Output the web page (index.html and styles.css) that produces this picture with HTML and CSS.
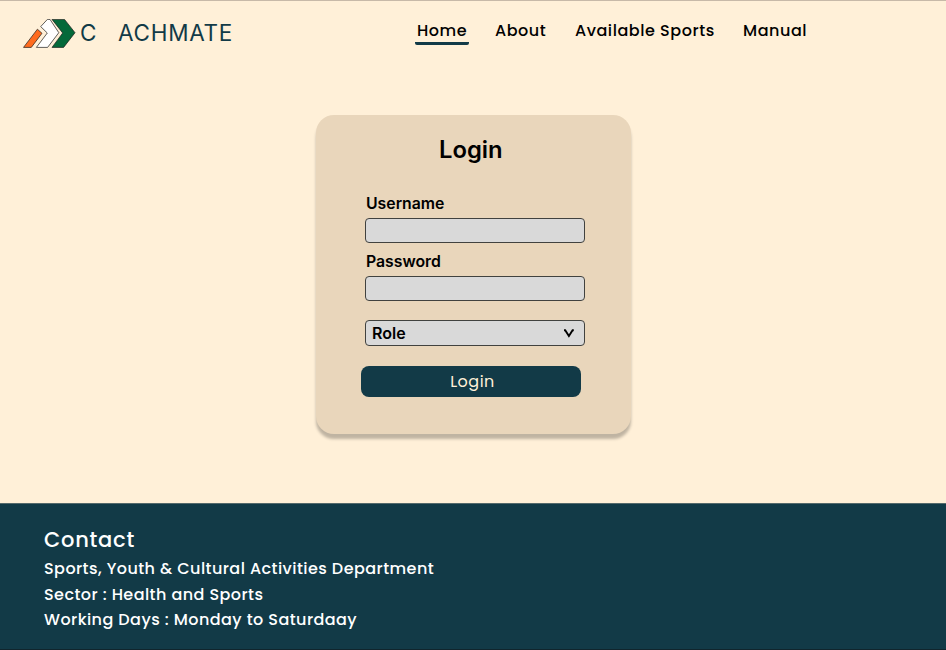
FILE: index.html
```html
<!DOCTYPE html>
<html lang="en">
<head>
<meta charset="utf-8">
<title>Coachmate</title>
<link rel="stylesheet" href="styles.css">
</head>
<body>
<header class="header">
  <a class="brand">
    <svg class="logo" viewBox="23 19 53 29" width="53" height="29" stroke="#1d1d1b" stroke-width=".7">
      <path fill="#ff6b1e" d="M23.5 47.4 37.4 29.2 42 33.3 31.3 47.4Z"/>
      <path fill="#fff" d="M40.7 26.6 47.4 19.4H50L58.8 32.7 47.6 47.4H36.4L47.3 33Z"/>
      <path fill="#04693a" d="M52 19.4H64.5L75 32.7 63.6 47.4H52L62.7 33Z"/>
    </svg>
    <span class="brand-c">C</span><span class="brand-rest">ACHMATE</span>
  </a>
  <nav class="nav">
    <a class="n1 active">Home</a>
    <a class="n2">About</a>
    <a class="n3">Available Sports</a>
    <a class="n4">Manual</a>
  </nav>
</header>
<main class="main">
  <form class="card">
    <h1>Login</h1>
    <label>Username</label>
    <div class="field"></div>
    <label class="pw">Password</label>
    <div class="field"></div>
    <div class="field role"><span>Role</span>
      <svg width="12" height="9" viewBox="0 0 12 9" fill="none" stroke="#000" stroke-width="1.9"><path d="M1 1.300H2.200L5.900 7 9.600 1.300H10.800"/></svg>
    </div>
    <div class="submit"><span>Login</span></div>
  </form>
</main>
<footer class="footer">
  <h2><span>Contact</span></h2>
  <p class="f1"><span>Sports, Youth &amp; Cultural Activities Department</span></p>
  <p class="f2"><span>Sector : Health and Sports</span></p>
  <p class="f3"><span>Working Days : Monday to Saturdaay</span></p>
</footer>
</body>
</html>
```
FILE: styles.css
```css
* { box-sizing: border-box; }
body {
  margin: 0;
  height: 650px;
  overflow: hidden;
  display: flex;
  flex-direction: column;
  background: #fff0d8;
  color: #000;
  font-family: Poppins, Inter, sans-serif;
}
.header {
  height: 66px;
  border-top: 1px solid #c7b9a8;
  display: flex;
  align-items: flex-start;
}
.brand {
  width: 415px;
  padding: 18px 0 0 23px;
  display: flex;
  font: 400 22.500px/28px Inter, sans-serif;
  color: #123a47;
}
.brand-c { width: 37px; padding-left: 4px; }
.brand-rest { margin-left: 5px; letter-spacing: .75px; }
.nav {
  display: flex;
  padding-top: 19px;
  font-size: 16px;
  line-height: 22px;
  font-weight: 500;
  letter-spacing: .55px;
  white-space: nowrap;
}
.nav a { height: 25px; }
.n1 { width: 54px; padding-left: 2px; }
.n2 { width: 80px; margin-left: 26px; }
.n3 { width: 168px; }
.active { background: linear-gradient(#123a47, #123a47) bottom / 100% 3.500px no-repeat; border-radius: 2px; }
.main { height: 437px; padding: 48.500px 0 0 316px; }
.card {
  width: 314.500px;
  height: 319px;
  padding: 20.500px 46px 0 49px;
  border-radius: 18px;
  background: #e9d6bb;
  box-shadow: 0 5px 3px rgba(0, 0, 0, .25);
  font-family: Inter, sans-serif;
}
.card h1 {
  margin: 0 0 31px;
  padding-right: 8px;
  font-size: 23.800px;
  line-height: 30px;
  font-weight: 600;
  text-align: center;
}
.card label { display: block; height: 22px; padding-left: 1px; font-size: 15.800px; line-height: 16px; font-weight: 600; }
.card .pw { margin-top: 11px; }
.field {
  width: 220px;
  height: 25px;
  border: 1px solid #41423f;
  border-radius: 4px;
  background: #d9d9d9;
}
.role {
  height: 26px;
  margin-top: 19px;
  padding: 0 9px 0 6px;
  display: flex;
  align-items: center;
  justify-content: space-between;
  font-size: 16px;
  font-weight: 600;
}
.submit {
  width: 220px;
  height: 31.500px;
  margin: 19.500px 0 0 -4px;
  border-radius: 8px;
  background: #123a47;
  color: #fff0d8;
  font: 400 16px/32px Poppins, Inter, sans-serif;
  letter-spacing: .5px;
  text-align: center;
  padding-left: 3px;
}
.footer {
  height: 147px;
  padding: 22px 44px 0;
  background: #123a47;
  border-top: 1px solid #54696b;
  border-bottom: 1px solid #10252d;
  color: #fff;
}
.footer h2 { margin: 0; font-size: 21px; line-height: 28px; font-weight: 500; letter-spacing: .75px; }
.footer p { margin: 0; font-size: 16px; line-height: 25.700px; font-weight: 500; letter-spacing: .44px; white-space: nowrap; }
.f1 { padding-top: 2px; }
```
